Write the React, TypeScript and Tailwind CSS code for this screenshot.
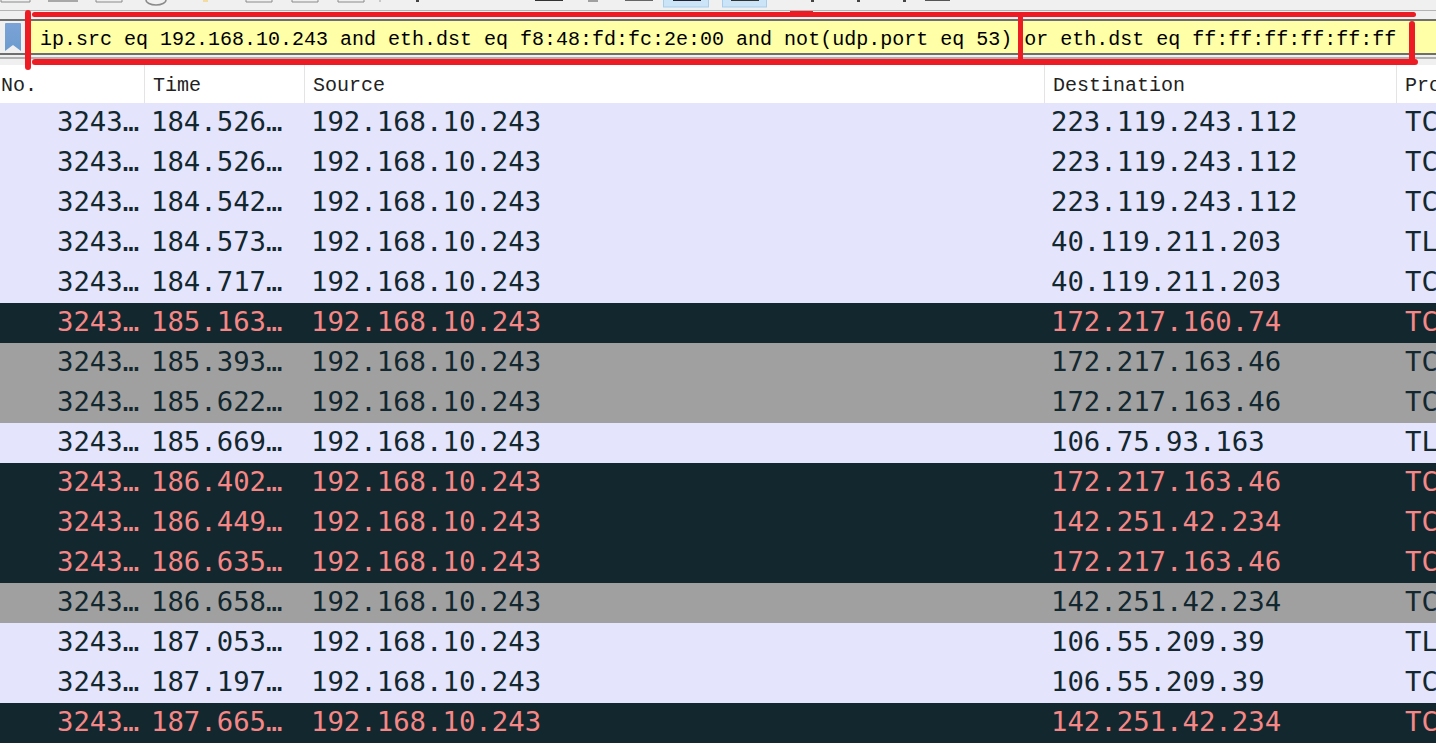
const ROWS: [string, string, string, string][] = [
  ["184.526…", "223.119.243.112", "TC", "light"],
  ["184.526…", "223.119.243.112", "TC", "light"],
  ["184.542…", "223.119.243.112", "TC", "light"],
  ["184.573…", "40.119.211.203", "TL", "light"],
  ["184.717…", "40.119.211.203", "TC", "light"],
  ["185.163…", "172.217.160.74", "TC", "dark"],
  ["185.393…", "172.217.163.46", "TC", "gray"],
  ["185.622…", "172.217.163.46", "TC", "gray"],
  ["185.669…", "106.75.93.163", "TL", "light"],
  ["186.402…", "172.217.163.46", "TC", "dark"],
  ["186.449…", "142.251.42.234", "TC", "dark"],
  ["186.635…", "172.217.163.46", "TC", "dark"],
  ["186.658…", "142.251.42.234", "TC", "gray"],
  ["187.053…", "106.55.209.39", "TL", "light"],
  ["187.197…", "106.55.209.39", "TC", "light"],
  ["187.665…", "142.251.42.234", "TC", "dark"],
];

const ROW_STYLE: Record<string, string> = {
  light: "bg-[#e4e4fc] text-[#12272e]",
  dark: "bg-[#12272e] text-[#f78787]",
  gray: "bg-[#a0a0a0] text-[#12272e]",
};

// bottoms of the toolbar icons, cut off by the top of the screenshot
function ToolbarStubs() {
  return (
    <svg width="1436" height="10" viewBox="0 0 1436 10" className="block">
      <path d="M1 0v2h29V0M96 0v2h26V0M246 0v2h26V0M292 0v2h26V0M338 0v2h26V0" fill="none" stroke="#8a8a8a" strokeWidth="1" />
      <rect x="48" y="0" width="30" height="2" fill="#a8a8a8" />
      <path d="M146 0a10 5 0 0 0 20 0" fill="none" stroke="#8a8a8a" strokeWidth="1.5" />
      <rect x="203" y="0" width="5" height="2" fill="#f2dca0" />
      <rect x="379" y="0" width="2" height="2" fill="#c8c8c8" />
      <rect x="416" y="0" width="3" height="2" fill="#444" />
      <rect x="535" y="0" width="28" height="1" fill="#333" />
      <rect x="588" y="0" width="10" height="2" fill="#a0a0a0" />
      <rect x="625" y="0" width="28" height="1" fill="#666" />
      <rect x="663.5" y="-1" width="45" height="8" fill="#cce4f7" stroke="#a6cdec" />
      <rect x="673" y="0" width="28" height="1" fill="#223" />
      <rect x="722.5" y="-1" width="44" height="8" fill="#cce4f7" stroke="#a6cdec" />
      <rect x="731" y="0" width="28" height="1" fill="#333" />
      <rect x="811" y="0" width="3" height="2" fill="#444" />
      <rect x="857" y="0" width="3" height="2" fill="#444" />
      <rect x="903" y="0" width="3" height="2" fill="#444" />
      <rect x="925" y="0" width="25" height="1" fill="#555" />
    </svg>
  );
}

export default function App() {
  return (
    <div className="relative h-[745px] w-[1436px] overflow-hidden bg-white">
      <div className="h-[19px] bg-[#f0f0f0]">
        <ToolbarStubs />
        <div className="h-[1px] bg-[#b4b4b4]" />
      </div>
      <div className="flex h-[36px] items-stretch border-y-[2px] border-[#6e6e6e] bg-[#f0f0f0]">
        <div className="flex w-[31px] shrink-0 items-center pl-[5px]">
          <svg width="16" height="28" viewBox="0 0 16 28">
            <defs>
              <linearGradient id="bookmark" x1="0" y1="0" x2="0" y2="1">
                <stop offset="0" stopColor="#7ba3d8" />
                <stop offset="1" stopColor="#6d9ccf" />
              </linearGradient>
            </defs>
            <path d="M1 0h14a1 1 0 0 1 1 1v27l-8-6-8 6V1a1 1 0 0 1 1-1z" fill="url(#bookmark)" />
          </svg>
        </div>
        <div className="flex-1 bg-[#ffffa8] pl-[9px] font-['Liberation_Mono',monospace] text-[20px] leading-[37px] whitespace-pre text-black">
          ip.src eq 192.168.10.243 and eth.dst eq f8:48:fd:fc:2e:00 and not(udp.port eq 53) or eth.dst eq ff:ff:ff:ff:ff:ff
        </div>
      </div>
      <div className="h-[10px] bg-[#f0f0f0] pt-[2px]">
        <div className="h-[2px] bg-[#b0b0b0]" />
      </div>
      <div className="flex h-[38px] font-['Liberation_Mono',monospace] text-[20px] leading-[42px] text-[#222]">
        <div className="w-[145px] shrink-0 border-r border-[#e4e4e4] pl-[1px]">No.</div>
        <div className="w-[160px] shrink-0 border-r border-[#e4e4e4] pl-[8px]">Time</div>
        <div className="w-[740px] shrink-0 border-r border-[#e4e4e4] pl-[8px]">Source</div>
        <div className="w-[352px] shrink-0 border-r border-[#e4e4e4] pl-[8px]">Destination</div>
        <div className="min-w-0 flex-1 pl-[8px] whitespace-pre">Pro</div>
      </div>
      <div className="font-['DejaVu_Sans_Mono',monospace] text-[27.3px] leading-[38px]">
        {ROWS.map((r, i) => (
          <div key={i} className={`flex h-[40px] whitespace-pre ${ROW_STYLE[r[3]]}`}>
            <div className="w-[151px] shrink-0 pl-[57px]">3243…</div>
            <div className="w-[160px] shrink-0">{r[0]}</div>
            <div className="w-[740px] shrink-0">192.168.10.243</div>
            <div className="w-[354px] shrink-0">{r[1]}</div>
            <div className="min-w-0 flex-1 overflow-hidden">{r[2]}</div>
          </div>
        ))}
      </div>

      {/* red marker strokes drawn over the screenshot */}
      <div className="absolute top-[12px] left-[32px] h-[5px] w-[1384px] rounded-full bg-[#ed1c24]" />
      <div className="absolute top-[11px] left-[790px] h-[6px] w-[23px] bg-[#ed1c24]" />
      <div className="absolute top-[59px] left-[32px] h-[6px] w-[1386px] rounded-full bg-[#ed1c24]" />
      <div className="absolute top-[10px] left-[25px] h-[60px] w-[6px] rounded-full bg-[#ed1c24]" />
      <div className="absolute top-[14px] left-[1018px] h-[48px] w-[5px] bg-[#ed1c24]" />
      <div className="absolute top-[21px] left-[1409px] h-[44px] w-[6px] rounded-full bg-[#ed1c24]" />
    </div>
  );
}
